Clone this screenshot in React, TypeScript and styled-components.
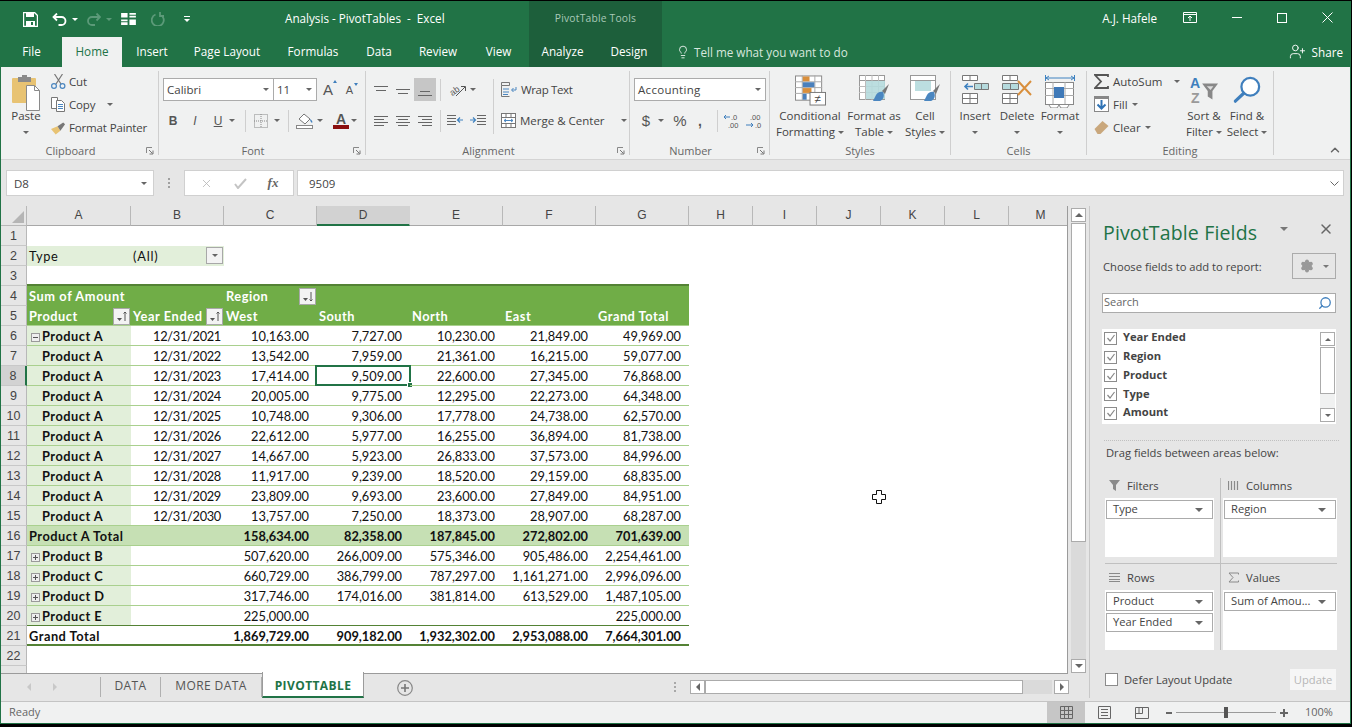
import * as React from "react";
import styled, { createGlobalStyle } from "styled-components";
import { ChevronUp, Lightbulb, Search, Settings, UserPlus, X } from "lucide-react";

const GlobalStyle = createGlobalStyle`
  html, body { margin: 0; padding: 0; height: 100%; background: #000; overflow: hidden; }
  body { font-family: "Open Sans", "Liberation Sans", sans-serif; font-size: 11.5px; }
`;

const GREEN = "#217346";

const Window = styled.div`
  width: 1352px;
  height: 727px;
  box-sizing: border-box;
  padding: 1px 1px 3px 0;
  background: #000;
  display: flex;
  flex-direction: column;
`;
const Frame = styled.div`
  flex: 1;
  display: flex;
  flex-direction: column;
  border-left: 1px solid ${GREEN};
  border-right: 1px solid ${GREEN};
  border-bottom: 1px solid ${GREEN};
  min-height: 0;
  background: #e6e6e6;
`;
const TitleBar = styled.div`
  height: 36px;
  flex: none;
  background: ${GREEN};
  display: flex;
  align-items: center;
  color: #fff;
`;
const Qat = styled.div`
  display: flex;
  align-items: center;
  width: 284px;
  padding-left: 22px;
  box-sizing: border-box;
`;
const QatIcon = styled.svg<{ $ml?: number }>`
  display: block;
  margin-left: ${p => p.$ml || 0}px;
`;
const DocTitle = styled.div`
  font-size: 11.7px;
  white-space: pre;
  width: 244px;
  margin-top: -2px;
`;
const ToolsLabel = styled.div`
  width: 133px;
  height: 36px;
  line-height: 35px;
  text-align: center;
  background: #1d5f3b;
  color: #a9c9b8;
  font-size: 10.3px;
  letter-spacing: 0.2px;
`;
const UserName = styled.div`
  font-size: 11.7px;
  margin-left: auto;
  margin-right: 26px;
  margin-top: -2px;
`;
const WindowBtns = styled.div`
  display: flex;
  align-items: center;
  gap: 35px;
  padding-right: 17px;
  margin-top: -3px;
`;
const TabBar = styled.div`
  height: 30px;
  flex: none;
  background: ${GREEN};
  display: flex;
  align-items: stretch;
  color: #fff;
  font-size: 11.7px;
`;
const RibbonTab = styled.div<{ $active?: boolean; $w: number; $ctx?: boolean }>`
  width: ${p => p.$w}px;
  text-align: center;
  line-height: 29px;
  background: ${p => (p.$active ? "#f0f1f1" : p.$ctx ? "#1d5f3b" : "transparent")};
  color: ${p => (p.$active ? GREEN : "#fff")};
`;
const TellMe = styled.div`
  display: flex;
  align-items: center;
  gap: 4px;
  margin-left: 14px;
  padding-bottom: 1px;
  color: #d7e7de;
  flex: 1;
`;
const Share = styled.div`
  display: flex;
  align-items: center;
  gap: 6px;
  padding: 0 7px 1px 0;
`;
const Ribbon = styled.div`
  height: 93px;
  box-sizing: border-box;
  background: #f0f1f1;
  border-bottom: 1px solid #d4d4d4;
  display: flex;
  position: relative;
  color: #444;
  flex: none;
`;
const CollapseIcon = styled(ChevronUp)`
  position: absolute;
  right: 8px;
  bottom: 2px;
`;
const Group = styled.div<{ $w: number }>`
  width: ${p => p.$w}px;
  flex: none;
  height: 84px;
  margin-top: 4px;
  border-right: 1px solid #cfcfcf;
  box-sizing: border-box;
  position: relative;
  display: flex;
  flex-direction: column;
`;
const GroupBody = styled.div<{ $pl?: number }>`
  flex: 1;
  display: flex;
  min-height: 0;
  padding-left: ${p => p.$pl || 0}px;
`;
const GroupLabel = styled.div<{ $pr?: number }>`
  height: 15px;
  line-height: 15px;
  margin-bottom: -3px;
  text-align: center;
  color: #666;
  font-size: 11px;
  flex: none;
  box-sizing: border-box;
  padding-right: ${p => p.$pr || 0}px;
`;
const Launcher = styled.svg`
  position: absolute;
  right: 4px;
  bottom: 0;
`;
const BigBtn = styled.div<{ $w: number }>`
  width: ${p => p.$w}px;
  flex: none;
  display: flex;
  flex-direction: column;
  align-items: center;
  line-height: 16px;
  text-align: center;
  white-space: nowrap;
  padding-top: 4px;
  box-sizing: border-box;
`;
const BigIcon = styled.div`
  height: 33px;
  display: flex;
  align-items: flex-start;
  justify-content: center;
`;
const CaretLine = styled.div`
  height: 16px;
  display: flex;
  align-items: center;
  justify-content: center;
  gap: 3px;
`;
const SmallCol = styled.div<{ $w?: number }>`
  display: flex;
  flex-direction: column;
  margin-top: -1px;
  width: ${p => (p.$w ? `${p.$w}px` : "auto")};
`;
const SmallBtn = styled.div`
  height: 23px;
  display: flex;
  align-items: center;
  gap: 4px;
  white-space: nowrap;
  & > svg { flex: none; }
`;
const ClipBtn = styled(SmallBtn)`
  gap: 3px;
  letter-spacing: -0.15px;
`;
const WrapBtn = styled(SmallBtn)`
  letter-spacing: -0.35px;
`;
const Stack = styled.div<{ $pl?: number }>`
  padding: 7px 0 0 ${p => p.$pl ?? 4}px;
  display: flex;
  flex-direction: column;
  gap: 8px;
  flex: 1;
`;
const ToolRow = styled.div`
  display: flex;
  align-items: center;
  height: 23px;
`;
const ComboBox = styled.div<{ $w: number; $spaced?: boolean }>`
  width: ${p => p.$w}px;
  height: 23px;
  box-sizing: border-box;
  background: #fff;
  border: 1px solid #ababab;
  margin-right: -1px;
  display: flex;
  align-items: center;
  justify-content: space-between;
  padding: 0 4px 0 3px;
  color: #444;
  letter-spacing: ${p => (p.$spaced ? "0.3px" : "0")};
`;
const Glyph = styled.span<{ $w: number; $bold?: boolean; $italic?: boolean; $u?: boolean; $size?: number }>`
  display: inline-block;
  width: ${p => p.$w}px;
  text-align: center;
  font-family: "Liberation Sans", sans-serif;
  font-weight: ${p => (p.$bold ? 700 : 400)};
  font-style: ${p => (p.$italic ? "italic" : "normal")};
  text-decoration: ${p => (p.$u ? "underline" : "none")};
  font-size: ${p => p.$size || 12}px;
  color: #555;
`;
const GrowGlyph = styled(Glyph)<{ $grow?: boolean }>`
  position: relative;
  &::after {
    content: "";
    position: absolute;
    top: -1px;
    right: ${p => (p.$grow ? "3px" : "1px")};
    border-left: 2.5px solid transparent;
    border-right: 2.5px solid transparent;
    ${p => (p.$grow ? "border-bottom: 3px solid #3f7fbd;" : "border-top: 3px solid #3f7fbd;")}
  }
`;
const Divider = styled.div<{ $ml?: number; $mr?: number; $h?: number; $mt?: number }>`
  width: 1px;
  flex: none;
  height: ${p => p.$h || 22}px;
  background: #cfcfcf;
  margin: ${p => p.$mt || 0}px ${p => p.$mr ?? 6}px 0 ${p => p.$ml ?? 6}px;
`;
const Spacer = styled.span<{ $w: number }>`
  display: inline-block;
  flex: none;
  width: ${p => p.$w}px;
`;
const AlignBtn = styled.div<{ $on?: boolean }>`
  width: 22px;
  height: 23px;
  display: flex;
  align-items: center;
  justify-content: center;
  background: ${p => (p.$on ? "#c6c6c6" : "transparent")};
`;
const AlignCol = styled.div`
  display: flex;
  flex-direction: column;
  gap: 8px;
  padding-top: 7px;
`;
const OrientIcon = styled.svg`
  overflow: visible;
  flex: none;
`;
const FormulaArea = styled.div`
  height: 46px;
  background: #e6e6e6;
  display: flex;
  align-items: flex-start;
  padding: 10px 0 0 5px;
  box-sizing: border-box;
  flex: none;
  color: #444;
`;
const NameBox = styled.div`
  width: 148px;
  height: 26px;
  box-sizing: border-box;
  background: #fff;
  border: 1px solid #d0d0d0;
  display: flex;
  align-items: center;
  justify-content: space-between;
  padding: 0 6px 0 7px;
`;
const Dots = styled.div`
  width: 30px;
  display: flex;
  flex-direction: column;
  align-items: center;
  justify-content: center;
  gap: 2px;
  height: 26px;
  & > i { width: 2px; height: 2px; background: #a0a0a0; display: block; }
`;
const FxBox = styled.div`
  width: 110px;
  height: 26px;
  box-sizing: border-box;
  background: #fff;
  border: 1px solid #d0d0d0;
  display: flex;
  align-items: center;
  justify-content: space-around;
  padding: 0 4px;
`;
const FxMark = styled.span`
  font-family: "Liberation Serif", serif;
  font-style: italic;
  font-weight: 700;
  font-size: 13px;
  color: #666;
`;
const FormulaInput = styled.div`
  width: 1047px;
  margin-left: 3px;
  height: 26px;
  box-sizing: border-box;
  background: #fff;
  border: 1px solid #d0d0d0;
  display: flex;
  align-items: center;
  justify-content: space-between;
  padding: 0 4px 0 11px;
`;
const Main = styled.div`
  height: 495px;
  flex: none;
  display: flex;
  align-items: flex-start;
  background: #e6e6e6;
`;
const SheetArea = styled.div`
  width: 1089px;
  flex: none;
  display: flex;
  flex-direction: column;
  border-right: 1px solid #c8c8c8;
  box-sizing: border-box;
  height: 492px;
`;
const SheetRow = styled.div`
  display: flex;
  height: 467px;
  flex: none;
`;
const Grid = styled.div`
  width: 1067px;
  flex: none;
  overflow: hidden;
  background: #fff;
  border-right: 1px solid #9b9b9b;
  border-bottom: 1px solid #9b9b9b;
  box-sizing: border-box;
  height: 468px;
`;
const Row = styled.div`
  display: flex;
  height: 20px;
`;
const Corner = styled.div`
  width: 26px;
  flex: none;
  background: #e6e6e6;
  border-right: 1px solid #b8b8b8;
  border-bottom: 1px solid #b8b8b8;
  box-sizing: border-box;
  height: 20px;
  position: relative;
  overflow: hidden;
  &::after {
    content: "";
    position: absolute;
    right: 2px;
    bottom: 2px;
    border-left: 12px solid transparent;
    border-bottom: 12px solid #b5b5b5;
  }
`;
const ColHead = styled.div<{ $w: number; $sel?: boolean }>`
  width: ${p => p.$w}px;
  flex: none;
  box-sizing: border-box;
  height: 20px;
  text-align: center;
  line-height: 19px;
  font-family: "Liberation Sans", sans-serif;
  font-size: 12px;
  color: #444;
  background: ${p => (p.$sel ? "#d2d2d2" : "#e6e6e6")};
  border-right: 1px solid ${p => (p.$sel ? "#d2d2d2" : "#b8b8b8")};
  border-bottom: ${p => (p.$sel ? `2px solid ${GREEN}` : "1px solid #a8a8a8")};
`;
const RowHead = styled.div<{ $sel?: boolean }>`
  width: 26px;
  flex: none;
  box-sizing: border-box;
  text-align: center;
  line-height: 20px;
  font-size: 12.5px;
  font-family: "Liberation Sans", sans-serif;
  color: #444;
  background: ${p => (p.$sel ? "#d2d2d2" : "#e6e6e6")};
  border-right: ${p => (p.$sel ? `2px solid ${GREEN}` : "1px solid #b8b8b8")};
  border-bottom: 1px solid #c8c8c8;
`;
const Cell = styled.div<{
  $w: number;
  $align?: "left" | "right";
  $bg?: string;
  $bold?: boolean;
  $color?: string;
  $line?: string;
  $pl?: number;
  $pr?: number;
  $ls?: number;
}>`
  width: ${p => p.$w}px;
  flex: none;
  box-sizing: border-box;
  position: relative;
  line-height: 20px;
  height: 20px;
  white-space: nowrap;
  font-family: "Lato", "Open Sans", sans-serif;
  font-size: 12.8px;
  letter-spacing: ${p => p.$ls || 0}px;
  text-align: ${p => p.$align || "left"};
  font-weight: ${p => (p.$bold ? 700 : 400)};
  color: ${p => p.$color || "#111"};
  background: ${p => p.$bg || "transparent"};
  padding-left: ${p => p.$pl ?? 2}px;
  padding-right: ${p => p.$pr ?? 8}px;
  ${p => (p.$line ? `border-bottom: ${p.$line};` : "")}
`;
const Selected = styled.div`
  position: absolute;
  left: -2px;
  top: -1px;
  right: -1px;
  bottom: -1px;
  border: 2px solid ${GREEN};
  pointer-events: none;
  &::after {
    content: "";
    position: absolute;
    right: -4px;
    bottom: -4px;
    width: 4px;
    height: 4px;
    background: ${GREEN};
    border: 1px solid #fff;
  }
`;
const FilterBtn = styled.div<{ $top?: number }>`
  position: absolute;
  right: 1px;
  top: ${p => p.$top ?? 2}px;
  width: 17px;
  height: 17px;
  box-sizing: border-box;
  background: #f3f3f3;
  border: 1px solid #a8a8a8;
  display: flex;
  align-items: center;
  justify-content: center;
`;
const Expander = styled.span`
  display: inline-block;
  width: 9px;
  height: 9px;
  box-sizing: border-box;
  border: 1px solid #9a9a9a;
  background: #eee;
  position: relative;
  margin: 0 2px 0 3px;
  vertical-align: -0.5px;
`;
const ExpandH = styled.i`
  position: absolute;
  left: 1px;
  right: 1px;
  top: 3px;
  height: 1px;
  background: #555;
`;
const ExpandV = styled.i`
  position: absolute;
  top: 1px;
  bottom: 1px;
  left: 3px;
  width: 1px;
  background: #555;
`;
const VScroll = styled.div`
  width: 21px;
  flex: none;
  box-sizing: border-box;
  display: flex;
  flex-direction: column;
  padding: 2px 3px 0 3px;
  background: #e6e6e6;
`;
const ScrollBtn = styled.div`
  width: 15px;
  height: 14px;
  flex: none;
  box-sizing: border-box;
  background: #fff;
  border: 1px solid #ababab;
  display: flex;
  align-items: center;
  justify-content: center;
`;
const VThumb = styled.div`
  width: 15px;
  height: 319px;
  margin-top: 1px;
  box-sizing: border-box;
  background: #fff;
  border: 1px solid #ababab;
  flex: none;
`;
const VTrack = styled.div`
  flex: 1;
  width: 15px;
  background: #dadada;
`;
const TabStrip = styled.div`
  flex: 1;
  display: flex;
  align-items: flex-start;
  color: #666;
`;
const NavArrows = styled.div`
  width: 100px;
  height: 20px;
  display: flex;
  gap: 22px;
  padding: 6px 0 0 26px;
  box-sizing: border-box;
  border-right: 1px solid #b0b0b0;
  margin-top: 4px;
`;
const SheetTab = styled.div<{ $active?: boolean; $w: number }>`
  width: ${p => p.$w}px;
  box-sizing: border-box;
  text-align: center;
  font-size: 12px;
  letter-spacing: 0.4px;
  ${p =>
    p.$active
      ? `background: #fff; color: ${GREEN}; font-weight: 700; border-bottom: 2px solid ${GREEN}; border-left: 1px solid #9b9b9b; border-right: 1px solid #9b9b9b; margin-top: -1px; line-height: 27px; height: 26px;`
      : `color: #555; margin-top: 4px; height: 20px; line-height: 18px; border-right: 1px solid #b0b0b0;`}
`;
const AddSheet = styled.div`
  margin: 7px 0 0 33px;
  width: 16px;
  height: 16px;
`;
const Grow = styled.span`
  flex: 1;
`;
const HScrollWrap = styled.div`
  width: 379px;
  display: flex;
  align-items: center;
  height: 14px;
  margin: 7px 20px 0 0;
  position: relative;
`;
const HDots = styled.div`
  position: absolute;
  left: -16px;
  top: 2px;
  display: flex;
  flex-direction: column;
  gap: 2px;
  & > i { width: 2px; height: 2px; background: #a8a8a8; display: block; }
`;
const HThumb = styled.div`
  flex: none;
  width: 318px;
  height: 14px;
  box-sizing: border-box;
  background: #fff;
  border: 1px solid #ababab;
`;
const HTrack = styled.div`
  flex: 1;
  height: 14px;
  background: #dadada;
  margin-right: 2px;
`;
const Panel = styled.div`
  flex: 1;
  height: 495px;
  padding: 12px 0 0 13px;
  box-sizing: border-box;
  position: relative;
  color: #444;
  font-size: 11.2px;
`;
const PanelTitle = styled.div`
  font-size: 19.5px;
  color: ${GREEN};
  line-height: 29px;
  letter-spacing: 0.15px;
  height: 28px;
`;
const PanelIconBtns = styled.div`
  position: absolute;
  top: 15px;
  right: 16px;
  display: flex;
  gap: 30px;
  align-items: center;
`;
const ChooseRow = styled.div`
  display: flex;
  justify-content: space-between;
  align-items: center;
  height: 26px;
  margin-top: 7px;
  width: 233px;
`;
const GearBtn = styled.div`
  width: 44px;
  height: 26px;
  box-sizing: border-box;
  border: 1px solid #ababab;
  background: #e6e6e6;
  display: flex;
  align-items: center;
  justify-content: center;
  gap: 9px;
`;
const SearchBox = styled.div`
  width: 234px;
  height: 20px;
  margin: 14px 0 0 -1px;
  box-sizing: border-box;
  background: #fff;
  border: 1px solid #ababab;
  display: flex;
  align-items: center;
  justify-content: space-between;
  padding: 0 3px 0 1px;
  color: #666;
  font-size: 11px;
`;
const SearchText = styled.span`
  margin-bottom: 3px;
`;
const SearchGlass = styled(Search)`
  transform: scaleX(-1);
`;
const FieldList = styled.div`
  margin: 16px 0 0 -1px;
  width: 234px;
  height: 95px;
  background: #fff;
  display: flex;
  justify-content: space-between;
  padding: 0 1px 0 2px;
  box-sizing: border-box;
`;
const FieldCol = styled.div`
  display: flex;
  flex-direction: column;
`;
const FieldItem = styled.div`
  display: flex;
  align-items: center;
  height: 18.75px;
  gap: 6px;
  font-weight: 700;
  font-size: 11.2px;
  color: #444;
`;
const FieldName = styled.span`
  margin-bottom: 3px;
`;
const Check = styled.div`
  width: 13px;
  height: 13px;
  box-sizing: border-box;
  border: 1px solid #8c8c8c;
  background: #fff;
  display: flex;
  align-items: center;
  justify-content: center;
  flex: none;
`;
const FieldScroll = styled.div`
  width: 15px;
  display: flex;
  flex-direction: column;
  height: 90px;
  margin-top: 3px;
`;
const FieldThumb = styled.div`
  height: 47px;
  box-sizing: border-box;
  border: 1px solid #ababab;
  background: #fff;
  margin-top: 1px;
`;
const FieldTrack = styled.div`
  flex: 1;
  background: #f0f1f1;
`;
const DotLine = styled.div`
  width: 235px;
  margin: 16px 0 0 1px;
  border-top: 1px dotted #c0c0c0;
  height: 0;
`;
const DragLabel = styled.div`
  margin: 2px 0 0 3px;
  height: 20px;
  line-height: 20px;
`;
const Areas = styled.div`
  display: grid;
  grid-template-columns: 115px 117px;
  grid-template-rows: 86px 86px;
  margin: 15px 0 0 2px;
  width: 232px;
`;
const Area = styled.div<{ $right?: boolean; $bottom?: boolean }>`
  ${p => (p.$right ? "border-left: 1px solid #c0c0c0; padding-left: 2px;" : "")}
  ${p => (p.$bottom ? "padding-top: 6px;" : "border-bottom: 1px solid #c0c0c0;")}
  box-sizing: border-box;
  display: flex;
  flex-direction: column;
`;
const AreaHead = styled.div<{ $right?: boolean }>`
  display: flex;
  align-items: center;
  gap: 7px;
  height: 20px;
  padding: 0 0 5px ${p => (p.$right ? 5 : 4)}px;
  box-sizing: border-box;
  flex: none;
`;
const AreaBody = styled.div<{ $right?: boolean; $bottom?: boolean }>`
  flex: 1;
  background: #fff;
  padding: 2px 1px;
  box-sizing: border-box;
  display: flex;
  flex-direction: column;
  gap: 2px;
  margin-bottom: ${p => (p.$bottom ? 0 : 6)}px;
  width: ${p => (p.$right ? 114 : 109)}px;
`;
const Pill = styled.div`
  height: 19px;
  flex: none;
  box-sizing: border-box;
  border: 1px solid #ababab;
  background: #fff;
  display: flex;
  align-items: center;
  justify-content: space-between;
  padding: 0 9px 0 6px;
  white-space: nowrap;
  color: #444;
`;
const PillText = styled.span`
  margin-bottom: 3px;
`;
const PanelFooter = styled.div`
  position: absolute;
  left: 15px;
  right: 14px;
  bottom: 11px;
  display: flex;
  justify-content: space-between;
  align-items: center;
`;
const DeferLabel = styled.div`
  display: flex;
  align-items: center;
  gap: 6px;
`;
const UpdateBtn = styled.div`
  width: 46px;
  height: 21px;
  background: #f6f6f6;
  color: #b6b6b6;
  text-align: center;
  line-height: 21px;
`;
const StatusBar = styled.div`
  height: 22px;
  background: #f0f1f1;
  border-top: 1px solid #c4c4c4;
  display: flex;
  align-items: center;
  flex: none;
  padding-left: 8px;
  color: #666;
  font-size: 11px;
  box-sizing: border-box;
`;
const StatusText = styled.span`
  margin-bottom: 3px;
`;
const StatusRight = styled.div`
  margin-left: auto;
  display: flex;
  align-items: center;
  height: 100%;
`;
const ViewBtn = styled.div<{ $on?: boolean }>`
  width: 38px;
  height: 100%;
  display: flex;
  align-items: center;
  justify-content: center;
  background: ${p => (p.$on ? "#c6c6c6" : "transparent")};
`;
const ZoomMinus = styled.svg`
  margin-left: 5px;
`;
const ZoomSlider = styled.div`
  width: 100px;
  height: 1px;
  background: #9a9a9a;
  position: relative;
  margin: 0 4px;
  &::after {
    content: "";
    position: absolute;
    left: 48px;
    top: -5px;
    width: 4px;
    height: 11px;
    background: #555;
  }
`;
const ZoomPct = styled(StatusText)`
  width: 62px;
  padding-left: 17px;
  box-sizing: border-box;
`;
const Cursor = styled.svg`
  position: absolute;
  left: 871px;
  top: 489px;
`;
const FlipSvg = styled.svg<{ $flip?: boolean }>`
  flex: none;
  transform: ${p => (p.$flip ? "scaleX(-1)" : "none")};
`;

/* ---- little drawings ---- */

const Tri = ({ dir = "down", c = "#666", s = 3 }: { dir?: string; c?: string; s?: number }) => {
  const pts: Record<string, string> = {
    down: `0,0 ${2 * s},0 ${s},${s}`,
    up: `0,${s} ${2 * s},${s} ${s},0`,
    left: `${s},0 ${s},${2 * s} 0,${s}`,
    right: `0,0 0,${2 * s} ${s},${s}`,
  };
  const vertical = dir === "down" || dir === "up";
  return (
    <svg width={vertical ? 2 * s : s} height={vertical ? s : 2 * s}>
      <polygon points={pts[dir]} fill={c} />
    </svg>
  );
};

const LauncherIcon = () => (
  <Launcher width="8" height="8" viewBox="0 0 8 8">
    <path d="M0.5 6V0.5H6" fill="none" stroke="#888" />
    <path d="M3 3l3.5 3.5M7 3.5V7H3.5" fill="none" stroke="#777" />
  </Launcher>
);

const Lines = ({ kind }: { kind: "top" | "mid" | "bot" | "left" | "center" | "right" }) => {
  const rows: Record<string, number[][]> = {
    top: [[2, 16, 4], [4, 14, 8]],
    mid: [[2, 16, 7], [4, 14, 11]],
    bot: [[4, 14, 9], [2, 16, 13]],
    left: [[2, 16, 3], [2, 12, 6], [2, 16, 9], [2, 12, 12]],
    center: [[2, 16, 3], [4, 14, 6], [2, 16, 9], [4, 14, 12]],
    right: [[2, 16, 3], [6, 16, 6], [2, 16, 9], [6, 16, 12]],
  };
  return (
    <svg width="18" height="16">
      {rows[kind].map((r, i) => (
        <path key={i} d={`M${r[0]} ${r[2] + 0.5}H${r[1]}`} stroke="#666" />
      ))}
    </svg>
  );
};

const PasteIcon = () => (
  <svg width="28" height="36" viewBox="0 0 28 36">
    <rect x="0" y="3" width="24" height="25" rx="1" fill="#e8c373" />
    <rect x="6" y="2" width="13" height="5" fill="#8a8a8a" />
    <rect x="10" y="0" width="5" height="3" fill="#8a8a8a" />
    <path d="M14.5 10.500h8l5 5v20h-13z" fill="#fff" stroke="#8a8a8a" />
    <path d="M22.500 10.500v5h5" fill="none" stroke="#8a8a8a" />
  </svg>
);

const CutIcon = () => (
  <svg width="15" height="15" viewBox="0 0 15 15">
    <path d="M3.500 0l6.500 10M11.500 0L5 10" stroke="#777" strokeWidth="1.2" fill="none" />
    <circle cx="3" cy="12" r="2.4" fill="none" stroke="#4a86c0" strokeWidth="1.2" />
    <circle cx="11.500" cy="12" r="2.4" fill="none" stroke="#4a86c0" strokeWidth="1.2" />
  </svg>
);

const CopyIcon = () => (
  <svg width="15" height="15" viewBox="0 0 15 15">
    <path d="M0.500 0.500h6v11h-6z" fill="#fff" stroke="#777" />
    <path d="M5.500 3.500h5l3 3v8h-8z" fill="#fff" stroke="#777" />
    <path d="M7 7.500h5M7 9.500h5M7 11.500h5" stroke="#4a86c0" />
  </svg>
);

const BrushIcon = () => (
  <svg width="15" height="14" viewBox="0 0 16 14">
    <path d="M0 8l7-3 3 5-5 4z" fill="#e8c373" />
    <path d="M7 5l6-4 2 2-5 7z" fill="#777" />
  </svg>
);

const WrapIcon = () => (
  <svg width="16" height="15" viewBox="0 0 16 15">
    <path d="M0.500 0.500h8v3h-8zM0.500 3.500v11h8" fill="none" stroke="#777" />
    <path d="M2 7h6M2 10h6M2 12.500h5" stroke="#4a86c0" />
    <path d="M15 5v3h-4M12.500 6l-2 2 2 2" fill="none" stroke="#4a86c0" />
  </svg>
);

const MergeIcon = () => (
  <svg width="15" height="15" viewBox="0 0 15 15">
    <rect x="0.500" y="0.500" width="14" height="14" fill="#fff" stroke="#777" />
    <path d="M0.500 4.500h14M0.500 10.500h14M5 0.500v4M10 0.500v4M5 10.500v4M10 10.500v4" stroke="#777" />
    <path d="M3 7.500h9M3 7.500l2-1.500M3 7.500l2 1.500M12 7.500l-2-1.500M12 7.500l-2 1.500" stroke="#4a86c0" fill="none" />
  </svg>
);

const IndentIcon = ({ flip }: { flip?: boolean }) => (
  <FlipSvg $flip={flip} width="16" height="13" viewBox="0 0 16 13">
    <path d="M7 1.500h9M7 4.500h9M7 7.500h9M7 10.500h9" stroke="#666" />
    <path d="M0 6h5M3 3.500l2.500 2.500L3 8.500" fill="none" stroke="#3f82c0" strokeWidth="1.2" />
  </FlipSvg>
);

const CondFormatIcon = () => (
  <svg width="31" height="31" viewBox="0 0 32 31">
    <rect x="0.500" y="0.500" width="27" height="25" fill="#fff" stroke="#888" />
    <path d="M7.500 0v26M20.500 0v26M0 6.500h28M0 12.500h28M0 18.500h28" stroke="#aaa" />
    <rect x="8" y="1" width="7" height="5" fill="#d98f3c" />
    <rect x="8" y="7" width="12" height="5" fill="#4a80bc" />
    <rect x="8" y="13" width="9" height="5" fill="#d98f3c" />
    <rect x="8" y="19" width="4" height="6" fill="#4a80bc" />
    <rect x="15.500" y="17.500" width="16" height="13" fill="#fff" stroke="#777" />
    <text x="23.500" y="28" textAnchor="middle" fontSize="12" fontFamily="Liberation Sans" fill="#444">≠</text>
  </svg>
);

const TableFmtIcon = ({ big }: { big?: boolean }) => (
  <svg width="31" height="31" viewBox="0 0 31 31">
    <rect x="0.500" y="0.500" width="25" height="24" fill="#fff" stroke="#999" />
    <path d="M0 5.500h26" stroke="#999" />
    {!big && <path d="M0 11.500h26M0 17.500h26M6.500 0v25M13 0v25M19.500 0v25" stroke="#bbb" />}
    <rect x={big ? 5 : 7} y="6" width={big ? 16 : 19} height={big ? 10 : 18} fill="#b5dadd" opacity="0.9" />
    <path d="M30 9L23 16l3 3z" fill="#777" />
    <path d="M24 17c-3-1-6 1-7 3l-3 6h7c3-1 5-5 3-9z" fill="#4a86c0" />
  </svg>
);

const CellsIcon = ({ kind }: { kind: "insert" | "delete" }) => (
  <svg width={kind === "insert" ? 27 : 30} height="29" viewBox={kind === "insert" ? "0 0 27 29" : "0 0 30 29"}>
    <path d="M0.500 0.500h15v5h-15zM8 0.500v5M0.500 18.500h15v10h-15zM0.500 23.500h15M8 18.500v10" fill="#fff" stroke="#777" />
    {kind === "insert" ? (
      <g>
        <path d="M12.500 8.500h14v6h-14zM19.500 8.500v6" fill="#b5dadd" stroke="#777" />
        <path d="M11 11.500H3M6 8.500l-3 3 3 3" fill="none" stroke="#3f82c0" strokeWidth="1.6" />
      </g>
    ) : (
      <g>
        <path d="M0.500 8.500h8v6h-8zM8.500 8.500h8v6h-8z" fill="#b5dadd" stroke="#777" />
        <path d="M16 6l13 14M29 6L16 20" stroke="#d98f3c" strokeWidth="2" />
      </g>
    )}
  </svg>
);

const FormatIcon = () => (
  <svg width="30" height="33" viewBox="0 0 30 33">
    <path d="M0.500 0v6M29.500 0v6M1 3h28M1 3l3-2M1 3l3 2M29 3l-3-2M29 3l-3 2" stroke="#3f82c0" fill="none" />
    <rect x="0.500" y="7.500" width="28" height="22" fill="#fff" stroke="#888" />
    <path d="M8 7v22M20 7v22M0 13.500h29M0 20.500h29" stroke="#aaa" />
    <rect x="9" y="12" width="10" height="11" fill="#3f79b8" />
    <path d="M4 30l2 3h6l2-3M14 30l2 3h6l2-3" fill="#fff" stroke="#888" />
  </svg>
);

const FillIcon = () => (
  <svg width="15" height="17" viewBox="0 0 15 17">
    <rect x="0.500" y="0.500" width="14" height="15" fill="#fff" stroke="#888" />
    <rect x="0" y="0" width="15" height="3" fill="#888" />
    <path d="M7.500 4v8M3.500 8.500l4 4 4-4" fill="none" stroke="#2f73b5" strokeWidth="2" />
  </svg>
);

const EraserIcon = () => (
  <svg width="15" height="13" viewBox="0 0 14 13">
    <path d="M0 8l8-8 6 5-8 8H3z" fill="#c9a77c" />
  </svg>
);

const SortIcon = () => (
  <svg width="30" height="30" viewBox="0 0 32 30">
    <text x="1" y="13" fontSize="15" fontWeight="700" fontFamily="Liberation Sans" fill="#3f7fbd">A</text>
    <text x="2" y="29" fontSize="15" fontWeight="700" fontFamily="Liberation Sans" fill="#9a9a9a">Z</text>
    <path d="M14 8h17l-6 8v9l-5-3v-6z" fill="#888" />
    <path d="M19 11h7l-3 4z" fill="#ddd" />
  </svg>
);

const FindIcon = () => (
  <svg width="28" height="30" viewBox="0 0 30 30">
    <circle cx="18.500" cy="11.500" r="9.500" fill="#fff" stroke="#3f7fbd" strokeWidth="2.4" />
    <path d="M11.500 18.500L2.500 27" stroke="#3f7fbd" strokeWidth="3.4" strokeLinecap="round" />
  </svg>
);

const SortBtnIcon = ({ down }: { down?: boolean }) => (
  <svg width="12" height="12" viewBox="0 0 12 12">
    <polygon points="1,7 6,7 3.500,10" fill="#555" />
    <path d={down ? "M9 1v9M7.500 8.500L9 10l1.500-1.500" : "M9 10V1M7.500 2.500L9 1l1.500 1.500"} stroke="#555" fill="none" />
  </svg>
);

/* ---- sheet data ---- */

const COLS: [string, number][] = [
  ["A", 104], ["B", 93], ["C", 93], ["D", 93], ["E", 93], ["F", 93], ["G", 93],
  ["H", 64], ["I", 64], ["J", 64], ["K", 64], ["L", 64], ["M", 64],
];
const W = COLS.map(c => c[1]);

const detail = [
  ["12/31/2021", "10,163.00", "7,727.00", "10,230.00", "21,849.00", "49,969.00"],
  ["12/31/2022", "13,542.00", "7,959.00", "21,361.00", "16,215.00", "59,077.00"],
  ["12/31/2023", "17,414.00", "9,509.00", "22,600.00", "27,345.00", "76,868.00"],
  ["12/31/2024", "20,005.00", "9,775.00", "12,295.00", "22,273.00", "64,348.00"],
  ["12/31/2025", "10,748.00", "9,306.00", "17,778.00", "24,738.00", "62,570.00"],
  ["12/31/2026", "22,612.00", "5,977.00", "16,255.00", "36,894.00", "81,738.00"],
  ["12/31/2027", "14,667.00", "5,923.00", "26,833.00", "37,573.00", "84,996.00"],
  ["12/31/2028", "11,917.00", "9,239.00", "18,520.00", "29,159.00", "68,835.00"],
  ["12/31/2029", "23,809.00", "9,693.00", "23,600.00", "27,849.00", "84,951.00"],
  ["12/31/2030", "13,757.00", "7,250.00", "18,373.00", "28,907.00", "68,287.00"],
];
const collapsed = [
  ["Product B", "507,620.00", "266,009.00", "575,346.00", "905,486.00", "2,254,461.00"],
  ["Product C", "660,729.00", "386,799.00", "787,297.00", "1,161,271.00", "2,996,096.00"],
  ["Product D", "317,746.00", "174,016.00", "381,814.00", "613,529.00", "1,487,105.00"],
  ["Product E", "225,000.00", "", "", "", "225,000.00"],
];
const productATotal = ["158,634.00", "82,358.00", "187,845.00", "272,802.00", "701,639.00"];
const grandTotal = ["1,869,729.00", "909,182.00", "1,932,302.00", "2,953,088.00", "7,664,301.00"];

const HEAD_BG = "#70ad47";
const LIGHT = "#e2efda";
const TOTAL = "#c6e0b4";
const LINE = "1px solid #a9d08e";
const DARK = "1px solid #548235";
const HEAVY = "2px solid #548235";
const LABEL_LS = 0.5;

const Toggle = ({ open }: { open?: boolean }) => (
  <Expander>
    <ExpandH />
    {!open && <ExpandV />}
  </Expander>
);

const fields = ["Year Ended", "Region", "Product", "Type", "Amount"];

export default function App() {
  return (
    <Window>
      <GlobalStyle />
      <Frame>
        <TitleBar>
          <Qat>
            <QatIcon width="15" height="15" viewBox="0 0 15 15">
              <path d="M0.500 0.500h11l3 3v11h-14z" fill="none" stroke="#fff" strokeWidth="1.4" />
              <rect x="3" y="1" width="8" height="4" fill="#fff" />
              <rect x="3" y="9" width="9" height="5" fill="#fff" />
              <rect x="8" y="10" width="2" height="3" fill="#217346" />
            </QatIcon>
            <QatIcon $ml={14} width="15" height="13" viewBox="0 0 14 13">
              <path d="M1 4h8a4 4 0 0 1 0 8H6M4.500 0.500L1 4l3.500 3.500" fill="none" stroke="#fff" strokeWidth="1.8" />
            </QatIcon>
            <QatIcon $ml={5} width="6" height="3" viewBox="0 0 6 3"><polygon points="0,0 6,0 3,3" fill="#fff" /></QatIcon>
            <QatIcon $ml={9} width="14" height="13" viewBox="0 0 14 13">
              <path d="M13 4H5a4 4 0 0 0 0 8h3M9.500 0.500L13 4 9.500 7.500" fill="none" stroke="#5c9a79" strokeWidth="1.8" />
            </QatIcon>
            <QatIcon $ml={5} width="6" height="3" viewBox="0 0 6 3"><polygon points="0,0 6,0 3,3" fill="#5c9a79" /></QatIcon>
            <QatIcon $ml={9} width="15" height="12" viewBox="0 0 16 13">
              <path d="M0 0h7v5H0zM0 7h7v2H0zM0 10h7v3H0zM9 0h7v2H9zM9 3h7v2H9zM9 7h7v6H9z" fill="#fff" />
            </QatIcon>
            <QatIcon $ml={15} width="14" height="14" viewBox="0 0 14 14">
              <path d="M9 2.500a6 6 0 1 1-4.500 0M9 0v4h4" fill="none" stroke="#5c9a79" strokeWidth="1.8" />
            </QatIcon>
            <QatIcon $ml={19} width="6" height="7" viewBox="0 0 6 7">
              <path d="M0 0.500h6" stroke="#fff" />
              <polygon points="0,3 6,3 3,6" fill="#fff" />
            </QatIcon>
          </Qat>
          <DocTitle>Analysis - PivotTables  -  Excel</DocTitle>
          <ToolsLabel>PivotTable Tools</ToolsLabel>
          <UserName>A.J. Hafele</UserName>
          <WindowBtns>
            <svg width="14" height="11" viewBox="0 0 14 11">
              <path d="M0.500 0.500h13v10h-13zM0.500 2.500h13" fill="none" stroke="#fff" />
              <path d="M7 9V4M5 6l2-2 2 2" fill="none" stroke="#fff" />
            </svg>
            <svg width="10" height="1"><rect width="10" height="1" fill="#fff" /></svg>
            <svg width="10" height="10"><rect x="0.500" y="0.500" width="9" height="9" fill="none" stroke="#fff" /></svg>
            <svg width="11" height="11" viewBox="0 0 11 11"><path d="M0.500 0.500l10 10M10.500 0.500l-10 10" stroke="#fff" /></svg>
          </WindowBtns>
        </TitleBar>
        <TabBar>
          <RibbonTab $w={61}>File</RibbonTab>
          <RibbonTab $w={60} $active>Home</RibbonTab>
          <RibbonTab $w={60}>Insert</RibbonTab>
          <RibbonTab $w={90}>Page Layout</RibbonTab>
          <RibbonTab $w={82}>Formulas</RibbonTab>
          <RibbonTab $w={50}>Data</RibbonTab>
          <RibbonTab $w={68}>Review</RibbonTab>
          <RibbonTab $w={53}>View</RibbonTab>
          <Spacer $w={4} />
          <RibbonTab $w={67} $ctx>Analyze</RibbonTab>
          <RibbonTab $w={66} $ctx>Design</RibbonTab>
          <TellMe>
            <Lightbulb size={14} color="#fff" strokeWidth={1.4} />
            Tell me what you want to do
          </TellMe>
          <Share>
            <UserPlus size={17} color="#fff" strokeWidth={1.3} />
            Share
          </Share>
        </TabBar>
        <Ribbon>
          <Group $w={158}>
            <GroupBody>
              <BigBtn $w={50}>
                <BigIcon><PasteIcon /></BigIcon>
                Paste
                <CaretLine><Tri /></CaretLine>
              </BigBtn>
              <SmallCol>
                <ClipBtn><CutIcon />Cut</ClipBtn>
                <ClipBtn><CopyIcon />Copy<Spacer $w={6} /><Tri /></ClipBtn>
                <ClipBtn><BrushIcon />Format Painter</ClipBtn>
              </SmallCol>
            </GroupBody>
            <GroupLabel $pr={18}>Clipboard</GroupLabel>
            <LauncherIcon />
          </Group>
          <Group $w={207}>
            <Stack>
              <ToolRow>
                <ComboBox $w={111}>Calibri<Tri /></ComboBox>
                <ComboBox $w={44}>11<Tri /></ComboBox>
                <GrowGlyph $w={24} $size={15} $grow>A</GrowGlyph>
                <GrowGlyph $w={19} $size={11}>A</GrowGlyph>
              </ToolRow>
              <ToolRow>
                <Glyph $w={20} $bold>B</Glyph>
                <Glyph $w={24} $italic>I</Glyph>
                <Glyph $w={22} $u>U</Glyph>
                <Tri />
                <Divider $ml={10} $mr={8} />
                <svg width="14" height="14"><rect x="0.500" y="0.500" width="13" height="13" fill="none" stroke="#888" strokeDasharray="1 1" /><path d="M7 0v14M0 7h14" stroke="#888" strokeDasharray="1 1" /></svg>
                <Spacer $w={6} />
                <Tri />
                <Divider $ml={8} $mr={7} />
                <svg width="18" height="17" viewBox="0 0 18 17">
                  <path d="M3 7l5-5 6 5-5 5z" fill="#fff" stroke="#777" />
                  <path d="M14 7c2 1 3 3 2 4-1-1-2-2-2-4z" fill="#3f7fbd" />
                  <rect x="0.500" y="13.500" width="16" height="3" fill="#fff" stroke="#888" />
                </svg>
                <Spacer $w={3} />
                <Tri />
                <Spacer $w={10} />
                <svg width="16" height="17" viewBox="0 0 16 17">
                  <text x="8" y="12" textAnchor="middle" fontSize="14" fontWeight="700" fontFamily="Liberation Sans" fill="#555">A</text>
                  <rect y="13" width="16" height="4" fill="#8b0f0f" />
                </svg>
                <Spacer $w={2} />
                <Tri />
              </ToolRow>
            </Stack>
            <GroupLabel $pr={18}>Font</GroupLabel>
            <LauncherIcon />
          </Group>
          <Group $w={264}>
            <GroupBody $pl={4}>
              <AlignCol>
                <ToolRow>
                  <AlignBtn><Lines kind="top" /></AlignBtn>
                  <AlignBtn><Lines kind="mid" /></AlignBtn>
                  <AlignBtn $on><Lines kind="bot" /></AlignBtn>
                  <Divider $ml={4} $mr={4} />
                  <Spacer $w={3} />
                  <OrientIcon width="20" height="16" viewBox="0 0 20 16">
                    <text x="1" y="12" fontSize="9" fontFamily="Liberation Sans" fill="#555" transform="rotate(-35 6 8)">ab</text>
                    <path d="M8 14L17 5M13 4.500h4.500V9" fill="none" stroke="#555" />
                  </OrientIcon>
                  <Spacer $w={2} />
                  <Tri />
                </ToolRow>
                <ToolRow>
                  <AlignBtn><Lines kind="left" /></AlignBtn>
                  <AlignBtn><Lines kind="center" /></AlignBtn>
                  <AlignBtn><Lines kind="right" /></AlignBtn>
                  <Divider $ml={4} $mr={4} />
                  <Spacer $w={2} />
                  <IndentIcon flip />
                  <Spacer $w={7} />
                  <IndentIcon />
                </ToolRow>
              </AlignCol>
              <Divider $ml={7} $mr={7} $h={55} $mt={8} />
              <AlignCol>
                <WrapBtn><WrapIcon />Wrap Text</WrapBtn>
                <SmallBtn><MergeIcon />Merge &amp; Center<Spacer $w={8} /><Tri /></SmallBtn>
              </AlignCol>
            </GroupBody>
            <GroupLabel $pr={18}>Alignment</GroupLabel>
            <LauncherIcon />
          </Group>
          <Group $w={140}>
            <Stack>
              <ToolRow>
                <ComboBox $w={132} $spaced>Accounting<Tri /></ComboBox>
              </ToolRow>
              <ToolRow>
                <Glyph $w={24} $size={15}>$</Glyph>
                <Tri />
                <Spacer $w={6} />
                <Glyph $w={20} $size={15}>%</Glyph>
                <Glyph $w={20} $bold $size={14}>,</Glyph>
                <Divider $ml={7} $mr={6} />
                <svg width="18" height="16" viewBox="0 0 18 16">
                  <text x="7" y="7" fontSize="7.5" fontFamily="Liberation Sans" fill="#555">.0</text>
                  <text x="4" y="15" fontSize="7.5" fontFamily="Liberation Sans" fill="#555">.00</text>
                  <path d="M0 4h6M2 2L0 4l2 2" fill="none" stroke="#3f7fbd" />
                </svg>
                <Spacer $w={4} />
                <svg width="18" height="16" viewBox="0 0 18 16">
                  <text x="4" y="7" fontSize="7.5" fontFamily="Liberation Sans" fill="#555">.00</text>
                  <text x="9" y="15" fontSize="7.5" fontFamily="Liberation Sans" fill="#555">.0</text>
                  <path d="M0 12h7M5 10l2 2-2 2" fill="none" stroke="#3f7fbd" />
                </svg>
              </ToolRow>
            </Stack>
            <GroupLabel $pr={18}>Number</GroupLabel>
            <LauncherIcon />
          </Group>
          <Group $w={181}>
            <GroupBody $pl={4}>
              <BigBtn $w={72}>
                <BigIcon><CondFormatIcon /></BigIcon>
                Conditional
                <CaretLine>Formatting<Tri /></CaretLine>
              </BigBtn>
              <BigBtn $w={56}>
                <BigIcon><TableFmtIcon /></BigIcon>
                Format as
                <CaretLine>Table<Tri /></CaretLine>
              </BigBtn>
              <BigBtn $w={46}>
                <BigIcon><TableFmtIcon big /></BigIcon>
                Cell
                <CaretLine>Styles<Tri /></CaretLine>
              </BigBtn>
            </GroupBody>
            <GroupLabel>Styles</GroupLabel>
          </Group>
          <Group $w={136}>
            <GroupBody $pl={3}>
              <BigBtn $w={42}><BigIcon><CellsIcon kind="insert" /></BigIcon>Insert<CaretLine><Tri /></CaretLine></BigBtn>
              <BigBtn $w={42}><BigIcon><CellsIcon kind="delete" /></BigIcon>Delete<CaretLine><Tri /></CaretLine></BigBtn>
              <BigBtn $w={44}><BigIcon><FormatIcon /></BigIcon>Format<CaretLine><Tri /></CaretLine></BigBtn>
            </GroupBody>
            <GroupLabel>Cells</GroupLabel>
          </Group>
          <Group $w={187}>
            <GroupBody $pl={7}>
              <SmallCol $w={88}>
                <SmallBtn>
                  <svg width="15" height="15" viewBox="0 0 15 15"><path d="M14 3V1H1l6 6.500L1 14h13v-2" fill="none" stroke="#555" strokeWidth="1.8" /></svg>
                  AutoSum<Spacer $w={4} /><Tri />
                </SmallBtn>
                <SmallBtn><FillIcon />Fill<Tri /></SmallBtn>
                <SmallBtn><EraserIcon />Clear<Tri /></SmallBtn>
              </SmallCol>
              <BigBtn $w={44}>
                <BigIcon><SortIcon /></BigIcon>
                Sort &amp;
                <CaretLine>Filter<Tri /></CaretLine>
              </BigBtn>
              <BigBtn $w={42}>
                <BigIcon><FindIcon /></BigIcon>
                Find &amp;
                <CaretLine>Select<Tri /></CaretLine>
              </BigBtn>
            </GroupBody>
            <GroupLabel>Editing</GroupLabel>
          </Group>
          <CollapseIcon size={14} color="#666" strokeWidth={2.5} />
        </Ribbon>
        <FormulaArea>
          <NameBox>D8<Tri /></NameBox>
          <Dots><i /><i /><i /></Dots>
          <FxBox>
            <X size={13} color="#b5b5b5" strokeWidth={1.5} />
            <svg width="13" height="11" viewBox="0 0 13 11"><path d="M1 6l3 4 8-9" fill="none" stroke="#c4c4c4" strokeWidth="2" /></svg>
            <FxMark>fx</FxMark>
          </FxBox>
          <FormulaInput>9509<svg width="9" height="5" viewBox="0 0 9 5"><path d="M0.500 0.500l4 4 4-4" fill="none" stroke="#666" /></svg></FormulaInput>
        </FormulaArea>
        <Main>
          <SheetArea>
            <SheetRow>
              <Grid>
                <Row>
                  <Corner />
                  {COLS.map(([n, w]) => (
                    <ColHead key={n} $w={w} $sel={n === "D"}>{n}</ColHead>
                  ))}
                </Row>
                <Row><RowHead>1</RowHead></Row>
                <Row>
                  <RowHead>2</RowHead>
                  <Cell $w={W[0]} $bg={LIGHT} $ls={0.6}>Type</Cell>
                  <Cell $w={W[1]} $bg={LIGHT} $ls={0.8}>
                    (All)
                    <FilterBtn $top={1}><Tri /></FilterBtn>
                  </Cell>
                </Row>
                <Row>
                  <RowHead>3</RowHead>
                  {W.slice(0, 7).map((w, i) => <Cell key={i} $w={w} $line={HEAVY} />)}
                </Row>
                <Row>
                  <RowHead>4</RowHead>
                  <Cell $w={W[0]} $bg={HEAD_BG} $bold $color="#fff" $ls={0.6}>Sum of Amount</Cell>
                  <Cell $w={W[1]} $bg={HEAD_BG} />
                  <Cell $w={W[2]} $bg={HEAD_BG} $bold $color="#fff" $ls={LABEL_LS}>
                    Region
                    <FilterBtn><SortBtnIcon down /></FilterBtn>
                  </Cell>
                  {[3, 4, 5, 6].map(i => (
                    <Cell key={i} $w={W[i]} $bg={HEAD_BG} />
                  ))}
                </Row>
                <Row>
                  <RowHead>5</RowHead>
                  <Cell $w={W[0]} $bg={HEAD_BG} $bold $color="#fff" $line={LINE} $ls={LABEL_LS}>
                    Product
                    <FilterBtn><SortBtnIcon /></FilterBtn>
                  </Cell>
                  <Cell $w={W[1]} $bg={HEAD_BG} $bold $color="#fff" $line={LINE} $ls={0.6}>
                    Year Ended
                    <FilterBtn><SortBtnIcon /></FilterBtn>
                  </Cell>
                  {["West", "South", "North", "East", "Grand Total"].map((t, i) => (
                    <Cell key={t} $w={W[i + 2]} $bg={HEAD_BG} $bold $color="#fff" $line={LINE} $ls={LABEL_LS}>{t}</Cell>
                  ))}
                </Row>
                {detail.map((r, i) => (
                  <Row key={r[0]}>
                    <RowHead $sel={i === 2}>{i + 6}</RowHead>
                    <Cell $w={W[0]} $bg={LIGHT} $bold $line={LINE} $pl={i === 0 ? 1 : 15} $ls={LABEL_LS}>
                      {i === 0 && <Toggle open />}
                      Product A
                    </Cell>
                    <Cell $w={W[1]} $align="right" $line={LINE} $pr={3} $ls={-0.3}>{r[0]}</Cell>
                    {r.slice(1).map((v, j) => (
                      <Cell key={j} $w={W[j + 2]} $align="right" $line={LINE}>
                        {v}
                        {i === 2 && j === 1 && <Selected />}
                      </Cell>
                    ))}
                  </Row>
                ))}
                <Row>
                  <RowHead>16</RowHead>
                  <Cell $w={W[0]} $bg={TOTAL} $bold $line={LINE} $ls={LABEL_LS}>Product A Total</Cell>
                  <Cell $w={W[1]} $bg={TOTAL} $line={LINE} />
                  {productATotal.map((v, j) => (
                    <Cell key={j} $w={W[j + 2]} $bg={TOTAL} $bold $align="right" $line={LINE}>{v}</Cell>
                  ))}
                </Row>
                {collapsed.map((r, i) => (
                  <Row key={r[0]}>
                    <RowHead>{i + 17}</RowHead>
                    <Cell $w={W[0]} $bg={LIGHT} $bold $pl={1} $ls={LABEL_LS} $line={i === 3 ? DARK : LINE}><Toggle />{r[0]}</Cell>
                    <Cell $w={W[1]} $line={i === 3 ? DARK : LINE} />
                    {r.slice(1).map((v, j) => (
                      <Cell key={j} $w={W[j + 2]} $align="right" $line={i === 3 ? DARK : LINE}>{v}</Cell>
                    ))}
                  </Row>
                ))}
                <Row>
                  <RowHead>21</RowHead>
                  <Cell $w={W[0]} $bold $line={HEAVY} $ls={LABEL_LS}>Grand Total</Cell>
                  <Cell $w={W[1]} $line={HEAVY} />
                  {grandTotal.map((v, j) => (
                    <Cell key={j} $w={W[j + 2]} $bold $align="right" $line={HEAVY}>{v}</Cell>
                  ))}
                </Row>
                <Row><RowHead>22</RowHead></Row>
                <Row><RowHead /></Row>
              </Grid>
              <VScroll>
                <ScrollBtn><Tri dir="up" c="#666" s={4} /></ScrollBtn>
                <VThumb />
                <VTrack />
                <ScrollBtn><Tri c="#666" s={4} /></ScrollBtn>
              </VScroll>
            </SheetRow>
            <TabStrip>
              <NavArrows>
                <Tri dir="left" c="#c8c8c8" s={4} />
                <Tri dir="right" c="#c8c8c8" s={4} />
              </NavArrows>
              <SheetTab $w={60}>DATA</SheetTab>
              <SheetTab $w={101}>MORE DATA</SheetTab>
              <SheetTab $w={102} $active>PIVOTTABLE</SheetTab>
              <AddSheet>
                <svg width="16" height="16" viewBox="0 0 16 16">
                  <circle cx="8" cy="8" r="7.3" fill="none" stroke="#888" strokeWidth="1.2" />
                  <path d="M8 4v8M4 8h8" stroke="#777" strokeWidth="1.6" />
                </svg>
              </AddSheet>
              <Grow />
              <HScrollWrap>
                <HDots><i /><i /><i /></HDots>
                <ScrollBtn><Tri dir="left" c="#666" s={4} /></ScrollBtn>
                <HThumb />
                <HTrack />
                <ScrollBtn><Tri dir="right" c="#666" s={4} /></ScrollBtn>
              </HScrollWrap>
            </TabStrip>
          </SheetArea>
          <Panel>
            <PanelTitle>PivotTable Fields</PanelTitle>
            <PanelIconBtns>
              <Tri c="#777" s={4} />
              <X size={16} color="#666" strokeWidth={2.2} />
            </PanelIconBtns>
            <ChooseRow>
              <span>Choose fields to add to report:</span>
              <GearBtn>
                <Settings size={14} color="#999" fill="#999" />
                <Tri c="#777" />
              </GearBtn>
            </ChooseRow>
            <SearchBox>
              <SearchText>Search</SearchText>
              <SearchGlass size={14} color="#3f7fbd" strokeWidth={2.2} />
            </SearchBox>
            <FieldList>
              <FieldCol>
                {fields.map(f => (
                  <FieldItem key={f}>
                    <Check>
                      <svg width="10" height="10" viewBox="0 0 10 10"><path d="M1.500 5l2.500 3 4.500-6" fill="none" stroke="#888" strokeWidth="1.2" /></svg>
                    </Check>
                    <FieldName>{f}</FieldName>
                  </FieldItem>
                ))}
              </FieldCol>
              <FieldScroll>
                <ScrollBtn><Tri dir="up" c="#666" s={3} /></ScrollBtn>
                <FieldThumb />
                <FieldTrack />
                <ScrollBtn><Tri c="#666" s={3} /></ScrollBtn>
              </FieldScroll>
            </FieldList>
            <DotLine />
            <DragLabel>Drag fields between areas below:</DragLabel>
            <Areas>
              <Area>
                <AreaHead>
                  <svg width="11" height="11" viewBox="0 0 11 11"><path d="M0 0h11L7 5v6L4 9V5z" fill="#8a8a8a" /></svg>
                  Filters
                </AreaHead>
                <AreaBody>
                  <Pill><PillText>Type</PillText><Tri c="#666" s={4} /></Pill>
                </AreaBody>
              </Area>
              <Area $right>
                <AreaHead $right>
                  <svg width="11" height="11" viewBox="0 0 11 11"><path d="M0.500 1v9M3.500 1v9M6.500 1v9M9.500 1v9" stroke="#8a8a8a" strokeWidth="1.2" /></svg>
                  Columns
                </AreaHead>
                <AreaBody $right>
                  <Pill><PillText>Region</PillText><Tri c="#666" s={4} /></Pill>
                </AreaBody>
              </Area>
              <Area $bottom>
                <AreaHead>
                  <svg width="11" height="11" viewBox="0 0 11 11"><path d="M0 1.500h11M0 4.500h11M0 7.500h11M0 9.500h11" stroke="#8a8a8a" /></svg>
                  Rows
                </AreaHead>
                <AreaBody $bottom>
                  <Pill><PillText>Product</PillText><Tri c="#666" s={4} /></Pill>
                  <Pill><PillText>Year Ended</PillText><Tri c="#666" s={4} /></Pill>
                </AreaBody>
              </Area>
              <Area $right $bottom>
                <AreaHead $right>
                  <svg width="11" height="11" viewBox="0 0 11 11"><path d="M10.500 2.500V1H1l4 4.500L1 10h9.500V8.500" fill="none" stroke="#8a8a8a" /></svg>
                  Values
                </AreaHead>
                <AreaBody $right $bottom>
                  <Pill><PillText>Sum of Amou...</PillText><Tri c="#666" s={4} /></Pill>
                </AreaBody>
              </Area>
            </Areas>
            <PanelFooter>
              <DeferLabel>
                <Check />
                Defer Layout Update
              </DeferLabel>
              <UpdateBtn>Update</UpdateBtn>
            </PanelFooter>
          </Panel>
        </Main>
        <StatusBar>
          <StatusText>Ready</StatusText>
          <StatusRight>
            <ViewBtn $on>
              <svg width="13" height="13" viewBox="0 0 13 13"><path d="M0.500 0.500h12v12h-12zM0.500 4.500h12M0.500 8.500h12M4.500 0.500v12M8.500 0.500v12" fill="none" stroke="#666" /></svg>
            </ViewBtn>
            <ViewBtn>
              <svg width="13" height="13" viewBox="0 0 13 13"><path d="M0.500 0.500h12v12h-12zM3 3.500h7M3 6.500h7M3 9.500h7" fill="none" stroke="#666" /></svg>
            </ViewBtn>
            <ViewBtn>
              <svg width="14" height="12" viewBox="0 0 14 12"><path d="M0.500 0.500h13v11h-13zM0.500 6.500h7M7.500 0.500v6M4 0.500v6" fill="none" stroke="#666" /></svg>
            </ViewBtn>
            <ZoomMinus width="6" height="2"><rect width="6" height="2" fill="#666" /></ZoomMinus>
            <ZoomSlider />
            <svg width="8" height="8" viewBox="0 0 8 8"><path d="M0 4h8M4 0v8" stroke="#666" strokeWidth="2" /></svg>
            <ZoomPct>100%</ZoomPct>
          </StatusRight>
        </StatusBar>
        <Cursor width="16" height="16" viewBox="0 0 16 16">
          <path d="M5.500 1.500h5v4h4v5h-4v4h-5v-4h-4v-5h4z" fill="#fff" stroke="#111" />
        </Cursor>
      </Frame>
    </Window>
  );
}
